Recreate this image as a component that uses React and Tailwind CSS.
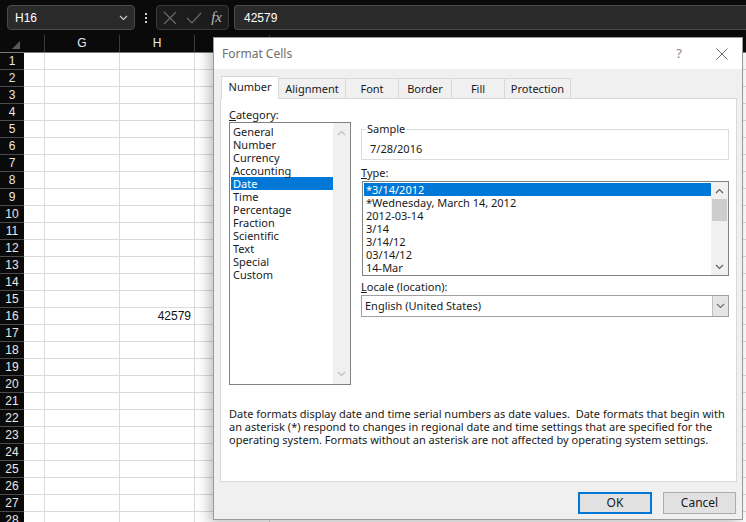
import React from "react";

const ui = { fontFamily: '"Noto Sans", "Open Sans", sans-serif' };
const sheet = { fontFamily: '"Liberation Sans", Arial, sans-serif' };

const categories = ["General", "Number", "Currency", "Accounting", "Date", "Time", "Percentage", "Fraction", "Scientific", "Text", "Special", "Custom"];
const types = ["*3/14/2012", "*Wednesday, March 14, 2012", "2012-03-14", "3/14", "3/14/12", "03/14/12", "14-Mar"];
const tabs = ["Number", "Alignment", "Font", "Border", "Fill", "Protection"];
const tabWidths = ["w-[58px]", "w-[67px]", "w-[53px]", "w-[53px]", "w-[53px]", "w-[66px]"];

const Chevron = ({ up, color = "#606060" }) => (
  <svg width="9" height="6" viewBox="0 0 9 6">
    <path d={up ? "M1 5 L4.5 1.5 L8 5" : "M1 1 L4.5 4.5 L8 1"} fill="none" stroke={color} strokeWidth="1.2" />
  </svg>
);

const SheetRow = ({ n, value }) => (
  <div className="flex h-[17px]">
    <div className="w-[24px] shrink-0 bg-[#0a0a0a] border-b border-[#4a4a4a] text-[#e8e8e8] text-[12px] leading-[16px] text-center">{n}</div>
    <div className="w-[21px] shrink-0 border-r border-b border-[#dadada] bg-white" />
    <div className="w-[75px] shrink-0 border-r border-b border-[#dadada] bg-white" />
    <div className="w-[75px] shrink-0 border-r border-b border-[#dadada] bg-white text-right pr-[3px] text-[12px] leading-[16px] text-[#111]">{value}</div>
    <div className="w-[75px] shrink-0 border-r border-b border-[#dadada] bg-white" />
    <div className="flex-1 border-b border-[#dadada] bg-white" />
  </div>
);

export default function App() {
  return (
    <div className="relative w-[746px] h-[522px] overflow-hidden bg-[#0a0a0a]" style={sheet}>
      {/* formula bar */}
      <div className="h-[35px] flex items-center pl-[7px]">
        <div className="w-[128px] h-[25px] rounded-[4px] border border-[#4a4a4a] bg-[#2a2a2a] flex items-center justify-between pl-[7px] pr-[6px]">
          <span className="text-white text-[12px]">H16</span>
          <Chevron color="#d0d0d0" />
        </div>
        <div className="w-[21px] flex flex-col items-center gap-[2px]">
          <span className="w-[2px] h-[2px] bg-[#cfcfcf]" />
          <span className="w-[2px] h-[2px] bg-[#cfcfcf]" />
          <span className="w-[2px] h-[2px] bg-[#cfcfcf]" />
        </div>
        <div className="w-[73px] h-[25px] rounded-[4px] border border-[#3a3a3a] bg-[#1c1c1c] flex items-center justify-between px-[6px]">
          <svg width="14" height="14" viewBox="0 0 14 14"><path d="M1 1 L13 13 M13 1 L1 13" stroke="#6a6a6a" strokeWidth="1.2" /></svg>
          <svg width="16" height="14" viewBox="0 0 16 14"><path d="M1 7 L6 12 L15 2" fill="none" stroke="#6a6a6a" strokeWidth="1.2" /></svg>
          <span className="text-[#b8b8b8] italic text-[15px]" style={{ fontFamily: '"Liberation Serif", serif' }}>fx</span>
        </div>
        <div className="ml-[5px] flex-1 h-[25px] rounded-l-[4px] border border-r-0 border-[#4a4a4a] bg-[#2a2a2a] flex items-center pl-[9px]">
          <span className="text-white text-[12px]">42579</span>
        </div>
      </div>

      {/* column headers */}
      <div className="flex h-[18px] border-b border-[#7a7a7a]">
        <div className="w-[24px] flex items-end justify-end pr-[4px] pb-[3px]">
          <div className="w-0 h-0 border-l-[8px] border-l-transparent border-b-[8px] border-b-[#5a5a5a]" />
        </div>
        <div className="w-[21px] border-r border-[#3a3a3a]" />
        <div className="w-[75px] border-r border-[#3a3a3a] text-center text-[#e8e8e8] text-[12px] leading-[17px]">G</div>
        <div className="w-[75px] border-r border-[#3a3a3a] text-center text-[#e8e8e8] text-[12px] leading-[17px]">H</div>
        <div className="w-[75px] border-r border-[#3a3a3a]" />
      </div>

      {/* grid */}
      <div>
        {Array.from({ length: 28 }, (_, i) => (
          <SheetRow key={i} n={i + 1} value={i === 15 ? "42579" : ""} />
        ))}
      </div>

      {/* Format Cells dialog */}
      <div
        className="absolute left-[213px] top-[37px] w-[530px] h-[483px] bg-[#f0f0f0] border border-[#9a9a9a] shadow-[-4px_4px_12px_rgba(0,0,0,0.25)] flex flex-col text-[11px] text-[#1a1a1a]"
        style={ui}
      >
        <div className="h-[31px] bg-white flex items-center pl-[8px] pr-[14px] shrink-0">
          <span className="text-[#6e6e6e] text-[12px]">Format Cells</span>
          <span className="ml-auto text-[#8a8a8a] text-[13px] mr-[34px]">?</span>
          <svg width="12" height="12" viewBox="0 0 12 12"><path d="M0.5 0.5 L11.5 11.5 M11.5 0.5 L0.5 11.5" stroke="#6e6e6e" strokeWidth="1" /></svg>
        </div>

        {/* tabs */}
        <div className="flex items-end pl-[7px] pt-[7px] h-[29px] shrink-0">
          {tabs.map((t, i) => (
            <div
              key={t}
              className={
                i === 0
                  ? `${tabWidths[i]} h-[23px] bg-white border border-b-0 border-[#d9d9d9] text-center leading-[20px] relative top-[1px] z-10`
                  : `${tabWidths[i]} h-[20px] bg-[#f0f0f0] border border-b-0 border-l-0 border-[#d9d9d9] text-center leading-[19px]`
              }
            >
              {t}
            </div>
          ))}
        </div>

        {/* panel */}
        <div className="ml-[6px] w-[517px] h-[384px] bg-white border border-[#d9d9d9] shrink-0 pl-[8px] pt-[8px] flex flex-col">
          <div className="flex">
            {/* category */}
            <div className="w-[122px] flex flex-col">
              <div className="h-[15px] leading-[15px]"><span className="underline">C</span>ategory:</div>
              <div className="h-[263px] border border-[#828282] flex">
                <div className="flex-1 pt-[2px] pl-[1px]">
                  {categories.map((c) => (
                    <div key={c} className={`h-[13px] leading-[13px] pl-[2px] ${c === "Date" ? "bg-[#0078d7] text-white" : ""}`}>{c}</div>
                  ))}
                </div>
                <div className="w-[17px] bg-[#f0f0f0] flex flex-col items-center justify-between py-[7px]">
                  <Chevron up color="#c0c0c0" />
                  <Chevron color="#c0c0c0" />
                </div>
              </div>
            </div>

            {/* right side */}
            <div className="ml-[10px] w-[368px] flex flex-col">
              <div className="relative mt-[22px] h-[31px] border border-[#dcdcdc]">
                <span className="absolute -top-[9px] left-[4px] bg-white px-[1px] leading-[16px]">Sample</span>
                <div className="pt-[11px] pl-[8px] leading-[16px]">7/28/2016</div>
              </div>
              <div className="mt-[5px] h-[15px] leading-[15px]"><span className="underline">T</span>ype:</div>
              <div className="mt-[1px] h-[95px] border border-[#828282] flex ml-[1px]">
                <div className="flex-1 pt-[1px] pl-[1px] overflow-hidden">
                  {types.map((t, i) => (
                    <div key={t} className={`h-[13px] leading-[13px] pl-[2px] ${i === 0 ? "bg-[#0078d7] text-white" : ""}`}>{t}</div>
                  ))}
                </div>
                <div className="w-[17px] bg-[#f0f0f0] flex flex-col items-center">
                  <div className="h-[17px] flex items-center"><Chevron up /></div>
                  <div className="w-[15px] h-[22px] bg-[#cdcdcd]" />
                  <div className="mt-auto h-[17px] flex items-center"><Chevron /></div>
                </div>
              </div>
              <div className="mt-[3px] h-[15px] leading-[15px]"><span className="underline">L</span>ocale (location):</div>
              <div className="mt-[1px] h-[22px] border border-[#a0a0a0] flex items-center">
                <span className="flex-1 pl-[3px]">English (United States)</span>
                <div className="w-[16px] h-full bg-[#e5e5e5] border-l border-[#c0c0c0] flex items-center justify-center">
                  <Chevron color="#707070" />
                </div>
              </div>
            </div>
          </div>

          <p className="mt-[22px] w-[500px] leading-[13px]">
            Date formats display date and time serial numbers as date values.&nbsp; Date formats that begin with an asterisk (*) respond to changes in regional date and time settings that are specified for the operating system. Formats without an asterisk are not affected by operating system settings.
          </p>
        </div>

        {/* buttons */}
        <div className="flex justify-end gap-[11px] pr-[6px] mt-[10px]">
          <button className="w-[74px] h-[22px] bg-[#e1e1e1] border-2 border-[#0078d7] text-[12px]">OK</button>
          <button className="w-[73px] h-[22px] bg-[#e1e1e1] border border-[#adadad] text-[12px]">Cancel</button>
        </div>
      </div>
    </div>
  );
}
